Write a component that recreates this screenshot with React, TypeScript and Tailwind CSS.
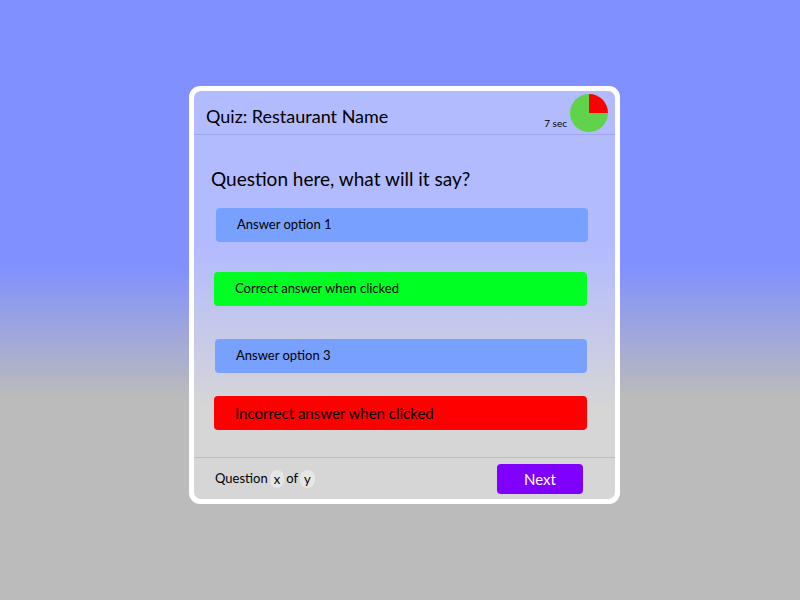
import React from "react";

function Pie() {
  return (
    <svg width="40" height="40" viewBox="0 0 40 40">
      <circle cx="20" cy="20" r="19" fill="#5fd44a" />
      <path d="M20 20 L20 1 A19 19 0 0 1 39 20 Z" fill="#ff0000" />
    </svg>
  );
}

function Answer({ text, bg, big }: { text: string; bg: string; big?: boolean }) {
  return (
    <div className={`h-[34px] rounded-[4px] flex items-center pl-[21px] ${bg} ${big ? "text-[15px]" : "text-[13px]"} text-black`}>
      {text}
    </div>
  );
}

export default function App() {
  return (
    <div
      className="w-[800px] h-[600px] pt-[86px] pl-[189px] bg-[linear-gradient(to_bottom,#8090ff_0%,#8090ff_44%,#bbbbbb_66%,#bbbbbb_100%)]"
      style={{ fontFamily: "Lato, 'Open Sans', sans-serif" }}
    >
      <div className="w-[431px] h-[418px] rounded-[11px] bg-white p-[5px]">
        <div className="w-full h-full rounded-[7px] flex flex-col bg-[linear-gradient(to_bottom,#b3bbff_0%,#b3bbff_38%,#d6d6d6_78%,#d6d6d6_100%)]">
          <div className="h-[44px] flex items-center justify-between border-b border-[#9ea7e6] pl-[12px] pr-[6px]">
            <div className="text-[18px] text-black mt-[7px]">Quiz: Restaurant Name</div>
            <div className="flex items-end gap-[2px]">
              <span className="text-[10px] text-black mb-[2px]">7 sec</span>
              <Pie />
            </div>
          </div>
          <div className="flex-1 flex flex-col">
            <div className="pl-[17px] pt-[32px] text-[19px] text-black leading-[24px]">Question here, what will it say?</div>
            <div className="pl-[20px] pr-[28px] flex flex-col">
              <div className="mt-[17px] ml-[2px] mr-[-1px]">
                <Answer text="Answer option 1" bg="bg-[#78a0ff]" />
              </div>
              <div className="mt-[30px]">
                <Answer text="Correct answer when clicked" bg="bg-[#00ff22]" />
              </div>
              <div className="mt-[33px] ml-[1px]">
                <Answer text="Answer option 3" bg="bg-[#78a0ff]" />
              </div>
              <div className="mt-[23px]">
                <Answer text="Incorrect answer when clicked" bg="bg-[#ff0000]" big />
              </div>
            </div>
          </div>
          <div className="h-[42px] border-t border-[#bdbdbd] flex items-center justify-between pl-[21px] pr-[32px]">
            <div className="text-[13px] text-black flex items-center">
              <span>Question</span>
              <span className="mx-[2px] px-[4px] rounded-full bg-[#e6e6e6] leading-[18px]">x</span>
              <span>of</span>
              <span className="ml-[2px] px-[4px] rounded-full bg-[#e6e6e6] leading-[18px]">y</span>
            </div>
            <div className="w-[86px] h-[30px] rounded-[4px] bg-[#8000ff] text-white text-[15px] flex items-center justify-center mb-[-1px]">
              Next
            </div>
          </div>
        </div>
      </div>
    </div>
  );
}
